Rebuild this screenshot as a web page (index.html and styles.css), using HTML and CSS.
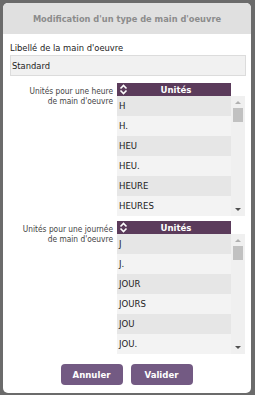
FILE: index.html
```html
<!DOCTYPE html>
<html lang="fr">
<head>
<meta charset="utf-8">
<link rel="stylesheet" href="styles.css">
</head>
<body>
<div class="dialog">
  <div class="title">Modification d'un type de main d'oeuvre</div>
  <div class="content">
    <div class="field-label">Libellé de la main d'oeuvre</div>
    <div class="input">Standard</div>

    <div class="units">
      <div class="units-label">Unités pour une heure<br>de main d'oeuvre</div>
      <div class="grid">
        <div class="grid-head">
          <svg class="sort" width="9" height="11" viewBox="0 0 9 11"><path d="M1.5 4.5 L4.5 1.5 L7.5 4.5 M1.5 6.5 L4.5 9.5 L7.5 6.5" fill="none" stroke="#fff" stroke-width="1.6"/></svg>
          <span>Unités</span>
        </div>
        <div class="grid-body">
          <div class="rows">
            <div class="row">H</div>
            <div class="row">H.</div>
            <div class="row">HEU</div>
            <div class="row">HEU.</div>
            <div class="row">HEURE</div>
            <div class="row">HEURES</div>
          </div>
          <div class="scrollbar">
            <span class="arrow up"></span>
            <span class="thumb"></span>
            <span class="arrow down"></span>
          </div>
        </div>
      </div>
    </div>

    <div class="units">
      <div class="units-label">Unités pour une journée<br>de main d'oeuvre</div>
      <div class="grid">
        <div class="grid-head">
          <svg class="sort" width="9" height="11" viewBox="0 0 9 11"><path d="M1.5 4.5 L4.5 1.5 L7.5 4.5 M1.5 6.5 L4.5 9.5 L7.5 6.5" fill="none" stroke="#fff" stroke-width="1.6"/></svg>
          <span>Unités</span>
        </div>
        <div class="grid-body">
          <div class="rows">
            <div class="row">J</div>
            <div class="row">J.</div>
            <div class="row">JOUR</div>
            <div class="row">JOURS</div>
            <div class="row">JOU</div>
            <div class="row">JOU.</div>
          </div>
          <div class="scrollbar">
            <span class="arrow up"></span>
            <span class="thumb"></span>
            <span class="arrow down"></span>
          </div>
        </div>
      </div>
    </div>

    <div class="buttons">
      <button class="btn">Annuler</button>
      <button class="btn">Valider</button>
    </div>
  </div>
</div>
</body>
</html>
```
FILE: styles.css
```css
html, body {
  margin: 0;
  padding: 0;
  background: #6b6b6b;
  width: 255px;
  height: 395px;
  overflow: hidden;
}
body {
  padding: 3px 4px 2px 3px;
  box-sizing: border-box;
  font-family: "DejaVu Sans Condensed", "DejaVu Sans", sans-serif;
}
.dialog {
  background: #fff;
  border-radius: 5px;
  height: 390px;
  overflow: hidden;
  display: flex;
  flex-direction: column;
}
.title {
  background: #e0e0e0;
  height: 31px;
  display: flex;
  align-items: center;
  justify-content: center;
  font-weight: bold;
  font-size: 9.2px;
  color: #8c8c8c;
}
.content {
  padding: 0 5px 0 7px;
  display: flex;
  flex-direction: column;
}
.field-label {
  margin-top: 8px;
  font-size: 9.3px;
  color: #222;
  height: 11px;
  line-height: 11px;
}
.input {
  margin-top: 2px;
  height: 21px;
  border: 1px solid #dcdcdc;
  background: #f1f1f1;
  box-sizing: border-box;
  font-size: 9.3px;
  line-height: 19px;
  padding-left: 1px;
  color: #222;
}
.units {
  display: flex;
  gap: 4px;
  margin-top: 7px;
}
.units + .units {
  margin-top: 5px;
}
.units-label {
  width: 103px;
  text-align: right;
  font-size: 8.3px;
  line-height: 10px;
  color: #444;
  padding-top: 3px;
}
.grid {
  width: 128px;
  display: flex;
  flex-direction: column;
}
.grid-head {
  width: 114px;
  height: 13px;
  background: #5b3b5b;
  color: #fff;
  font-weight: bold;
  font-size: 9.5px;
  display: flex;
  align-items: center;
  position: relative;
}
.grid-head .sort {
  position: absolute;
  left: 2px;
  top: 1px;
}
.grid-head span {
  flex: 1;
  text-align: center;
  padding-left: 4px;
}
.grid-body {
  display: flex;
  height: 120px;
  overflow: hidden;
}
.rows {
  width: 114px;
  display: flex;
  flex-direction: column;
}
.row {
  height: 20px;
  flex: none;
  line-height: 20px;
  padding-left: 2px;
  font-size: 9.5px;
  color: #222;
  background: #e6e6e6;
}
.row:nth-child(even) {
  background: #f3f3f3;
}
.scrollbar {
  width: 14px;
  background: #f0f0f0;
  position: relative;
}
.thumb {
  position: absolute;
  left: 2px;
  top: 12px;
  width: 10px;
  height: 14px;
  background: #c1c1c1;
}
.arrow {
  position: absolute;
  left: 4px;
  width: 0;
  height: 0;
  border-left: 3px solid transparent;
  border-right: 3px solid transparent;
}
.arrow.up {
  top: 5px;
  border-bottom: 3px solid #b0b0b0;
}
.arrow.down {
  bottom: 5px;
  border-top: 3px solid #505050;
}
.buttons {
  display: flex;
  justify-content: center;
  gap: 8px;
  margin-top: 10px;
  padding-right: 3px;
}
.btn {
  width: 62px;
  height: 21px;
  border: none;
  border-radius: 4px;
  background: #735a83;
  color: #fff;
  font-family: "DejaVu Sans Condensed", "DejaVu Sans", sans-serif;
  font-weight: bold;
  font-size: 9.5px;
  padding: 0;
}
```
